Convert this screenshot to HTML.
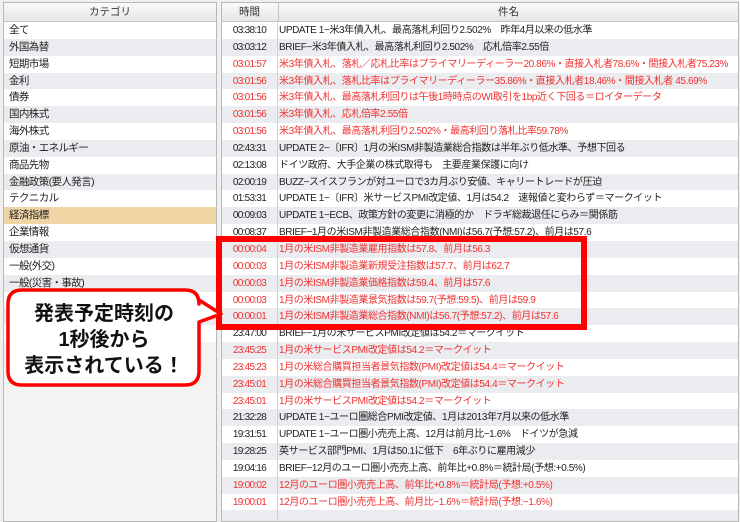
<!DOCTYPE html>
<html><head><meta charset="utf-8"><style>
*{margin:0;padding:0;box-sizing:border-box}
body{width:740px;height:511px;background:#f0f0f0;position:relative;overflow:hidden;font-family:"Liberation Sans","Noto Sans CJK JP",sans-serif;font-size:11px;color:#222}
.panel{position:absolute;top:2px;border:1px solid #b8b8b8;background:#f3f3f3;overflow:hidden}
.hdr{height:19px;background:linear-gradient(#fafafa,#e6e6e6);border-bottom:1px solid #c4c4c4;font-size:10.5px;line-height:18px;text-align:center;color:#333;position:relative}
.row{height:16.85px;line-height:17px;white-space:nowrap;position:relative}
.row:nth-child(odd){background:#fff}
.row:nth-child(even){background:#ebecef}
.row.sel{background:#f0d5a5}
#left{left:3px;width:214px;height:520px}
#left .row{padding-left:5px;font-size:10.5px;letter-spacing:-0.6px}
#right{left:221px;width:518px;height:520px;background:#fff}
.t{position:absolute;left:0;width:55px;text-align:center;font-size:10px;letter-spacing:-0.7px}
.s{position:absolute;left:57px;font-size:10px;letter-spacing:-0.4px}
.r{color:#f03030}
.vl{position:absolute;left:55px;top:0;bottom:0;width:1px;background:#d0d0d0}
</style></head><body>
<div class="panel" id="left">
<div class="hdr">カテゴリ</div>
<div>
<div class="row">全て</div><div class="row">外国為替</div><div class="row">短期市場</div><div class="row">金利</div><div class="row">債券</div><div class="row">国内株式</div><div class="row">海外株式</div><div class="row">原油・エネルギー</div><div class="row">商品先物</div><div class="row">金融政策(要人発言)</div><div class="row">テクニカル</div><div class="row sel">経済指標</div><div class="row">企業情報</div><div class="row">仮想通貨</div><div class="row">一般(外交)</div><div class="row">一般(災害・事故)</div><div class="row">一</div><div class="row">一</div><div class="row">一</div>
</div>
</div>
<div class="panel" id="right">
<div class="hdr"><span style="position:absolute;left:0;width:55px">時間</span><span style="position:absolute;left:56px;right:0;border-left:1px solid #c4c4c4">件名</span></div>
<div style="position:relative">
<div class="row"><span class="t">03:38:10</span><span class="s">UPDATE 1−米3年債入札、最高落札利回り2.502%　昨年4月以来の低水準</span></div>
<div class="row"><span class="t">03:03:12</span><span class="s">BRIEF−米3年債入札、最高落札利回り2.502%　応札倍率2.55倍</span></div>
<div class="row r"><span class="t">03:01:57</span><span class="s">米3年債入札、落札／応札比率はプライマリーディーラー20.86%・直接入札者78.6%・間接入札者75.23%</span></div>
<div class="row r"><span class="t">03:01:56</span><span class="s">米3年債入札、落札比率はプライマリーディーラー35.86%・直接入札者18.46%・間接入札者 45.69%</span></div>
<div class="row r"><span class="t">03:01:56</span><span class="s">米3年債入札、最高落札利回りは午後1時時点のWI取引を1bp近く下回る＝ロイターデータ</span></div>
<div class="row r"><span class="t">03:01:56</span><span class="s">米3年債入札、応札倍率2.55倍</span></div>
<div class="row r"><span class="t">03:01:56</span><span class="s">米3年債入札、最高落札利回り2.502%・最高利回り落札比率59.78%</span></div>
<div class="row"><span class="t">02:43:31</span><span class="s">UPDATE 2−〔IFR〕1月の米ISM非製造業総合指数は半年ぶり低水準、予想下回る</span></div>
<div class="row"><span class="t">02:13:08</span><span class="s">ドイツ政府、大手企業の株式取得も　主要産業保護に向け</span></div>
<div class="row"><span class="t">02:00:19</span><span class="s">BUZZ−スイスフランが対ユーロで3カ月ぶり安値、キャリートレードが圧迫</span></div>
<div class="row"><span class="t">01:53:31</span><span class="s">UPDATE 1−〔IFR〕米サービスPMI改定値、1月は54.2　速報値と変わらず＝マークイット</span></div>
<div class="row"><span class="t">00:09:03</span><span class="s">UPDATE 1−ECB、政策方針の変更に消極的か　ドラギ総裁退任にらみ＝関係筋</span></div>
<div class="row"><span class="t">00:08:37</span><span class="s">BRIEF−1月の米ISM非製造業総合指数(NMI)は56.7(予想:57.2)、前月は57.6</span></div>
<div class="row r"><span class="t">00:00:04</span><span class="s">1月の米ISM非製造業雇用指数は57.8、前月は56.3</span></div>
<div class="row r"><span class="t">00:00:03</span><span class="s">1月の米ISM非製造業新規受注指数は57.7、前月は62.7</span></div>
<div class="row r"><span class="t">00:00:03</span><span class="s">1月の米ISM非製造業価格指数は59.4、前月は57.6</span></div>
<div class="row r"><span class="t">00:00:03</span><span class="s">1月の米ISM非製造業景気指数は59.7(予想:59.5)、前月は59.9</span></div>
<div class="row r"><span class="t">00:00:01</span><span class="s">1月の米ISM非製造業総合指数(NMI)は56.7(予想:57.2)、前月は57.6</span></div>
<div class="row"><span class="t">23:47:00</span><span class="s">BRIEF−1月の米サービスPMI改定値は54.2＝マークイット</span></div>
<div class="row r"><span class="t">23:45:25</span><span class="s">1月の米サービスPMI改定値は54.2＝マークイット</span></div>
<div class="row r"><span class="t">23:45:23</span><span class="s">1月の米総合購買担当者景気指数(PMI)改定値は54.4＝マークイット</span></div>
<div class="row r"><span class="t">23:45:01</span><span class="s">1月の米総合購買担当者景気指数(PMI)改定値は54.4＝マークイット</span></div>
<div class="row r"><span class="t">23:45:01</span><span class="s">1月の米サービスPMI改定値は54.2＝マークイット</span></div>
<div class="row"><span class="t">21:32:28</span><span class="s">UPDATE 1−ユーロ圏総合PMI改定値、1月は2013年7月以来の低水準</span></div>
<div class="row"><span class="t">19:31:51</span><span class="s">UPDATE 1−ユーロ圏小売売上高、12月は前月比−1.6%　ドイツが急減</span></div>
<div class="row"><span class="t">19:28:25</span><span class="s">英サービス部門PMI、1月は50.1に低下　6年ぶりに雇用減少</span></div>
<div class="row"><span class="t">19:04:16</span><span class="s">BRIEF−12月のユーロ圏小売売上高、前年比+0.8%＝統計局(予想:+0.5%)</span></div>
<div class="row r"><span class="t">19:00:02</span><span class="s">12月のユーロ圏小売売上高、前年比+0.8%＝統計局(予想:+0.5%)</span></div>
<div class="row r"><span class="t">19:00:01</span><span class="s">12月のユーロ圏小売売上高、前月比−1.6%＝統計局(予想:−1.6%)</span></div>
<div class="row"></div>
<div class="vl"></div>
</div>
</div>
<div style="position:absolute;left:216px;top:236px;width:371px;height:94px;border:6px solid #f00"></div>
<svg style="position:absolute;left:0;top:0" width="740" height="511">
<path d="M22 290 H185 Q199 290 199 304 V300 L221 314 L199 322 V371 Q199 385 185 385 H22 Q8 385 8 371 V304 Q8 290 22 290 Z" fill="#fff" stroke="#f00" stroke-width="3.5" stroke-linejoin="round"/>
<text x="104" y="320" text-anchor="middle" font-family="Liberation Sans,Noto Sans CJK JP,sans-serif" font-size="20" font-weight="bold" fill="#111">発表予定時刻の</text>
<text x="104" y="346" text-anchor="middle" font-family="Liberation Sans,Noto Sans CJK JP,sans-serif" font-size="20" font-weight="bold" fill="#111">1秒後から</text>
<text x="104" y="372" text-anchor="middle" font-family="Liberation Sans,Noto Sans CJK JP,sans-serif" font-size="20" font-weight="bold" fill="#111">表示されている！</text>
</svg>
</body></html>
